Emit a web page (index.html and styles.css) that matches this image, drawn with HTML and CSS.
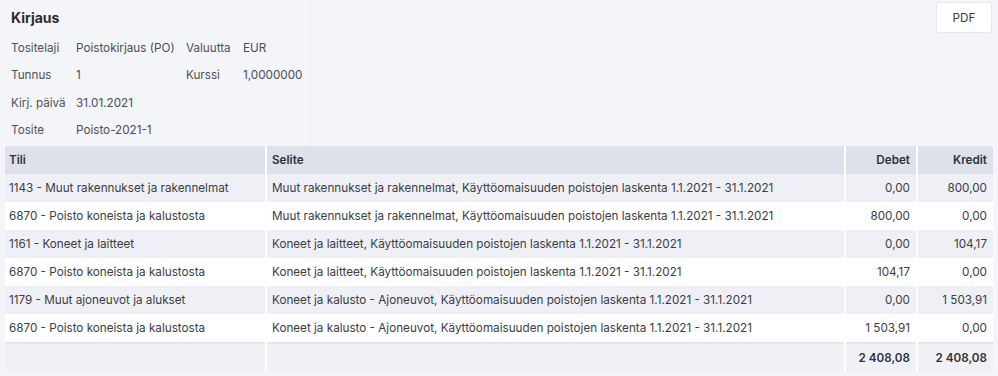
FILE: index.html
```html
<!DOCTYPE html>
<html lang="fi">
<head>
<meta charset="utf-8">
<link rel="stylesheet" href="styles.css">
</head>
<body>
<div class="page">
  <div class="top">
    <div class="info">
      <h1 class="title">Kirjaus</h1>
      <div class="grid">
        <span class="lbl">Tositelaji</span><span>Poistokirjaus (PO)</span><span class="lbl">Valuutta</span><span>EUR</span>
        <span class="lbl">Tunnus</span><span>1</span><span class="lbl">Kurssi</span><span>1,0000000</span>
        <span class="lbl">Kirj. päivä</span><span>31.01.2021</span><span></span><span></span>
        <span class="lbl">Tosite</span><span>Poisto-2021-1</span><span></span><span></span>
      </div>
    </div>
    <div class="actions"><button class="pdf">PDF</button></div>
  </div>
  <table class="tbl">
    <colgroup><col class="c1"><col class="c2"><col class="c3"><col class="c4"></colgroup>
    <thead>
      <tr><th>Tili</th><th>Selite</th><th class="num">Debet</th><th class="num">Kredit</th></tr>
    </thead>
    <tbody>
      <tr><td>1143 - Muut rakennukset ja rakennelmat</td><td>Muut rakennukset ja rakennelmat, Käyttöomaisuuden poistojen laskenta 1.1.2021 - 31.1.2021</td><td class="num">0,00</td><td class="num">800,00</td></tr>
      <tr><td>6870 - Poisto koneista ja kalustosta</td><td>Muut rakennukset ja rakennelmat, Käyttöomaisuuden poistojen laskenta 1.1.2021 - 31.1.2021</td><td class="num">800,00</td><td class="num">0,00</td></tr>
      <tr><td>1161 - Koneet ja laitteet</td><td>Koneet ja laitteet, Käyttöomaisuuden poistojen laskenta 1.1.2021 - 31.1.2021</td><td class="num">0,00</td><td class="num">104,17</td></tr>
      <tr><td>6870 - Poisto koneista ja kalustosta</td><td>Koneet ja laitteet, Käyttöomaisuuden poistojen laskenta 1.1.2021 - 31.1.2021</td><td class="num">104,17</td><td class="num">0,00</td></tr>
      <tr><td>1179 - Muut ajoneuvot ja alukset</td><td>Koneet ja kalusto - Ajoneuvot, Käyttöomaisuuden poistojen laskenta 1.1.2021 - 31.1.2021</td><td class="num">0,00</td><td class="num">1 503,91</td></tr>
      <tr><td>6870 - Poisto koneista ja kalustosta</td><td>Koneet ja kalusto - Ajoneuvot, Käyttöomaisuuden poistojen laskenta 1.1.2021 - 31.1.2021</td><td class="num">1 503,91</td><td class="num">0,00</td></tr>
    </tbody>
    <tfoot>
      <tr><td></td><td></td><td class="num">2 408,08</td><td class="num">2 408,08</td></tr>
    </tfoot>
  </table>
</div>
</body>
</html>
```
FILE: styles.css
```css
html, body {
  margin: 0;
  padding: 0;
  background: #ffffff;
}
body {
  font-family: Inter, "Liberation Sans", sans-serif;
  font-size: 11.7px;
  color: #3a3d44;
}
.page {
  width: 998px;
  height: 376px;
  background: #f4f5f8;
  box-sizing: border-box;
  padding: 0 5px 0 5px;
}
.top {
  display: flex;
  justify-content: space-between;
  height: 146px;
}
.info {
  width: 305px;
  box-sizing: border-box;
  border-right: 1px solid #eceef3;
  padding: 8px 0 0 6px;
}
.title {
  margin: 0;
  font-size: 14px;
  font-weight: 700;
  color: #2a2d33;
  line-height: 20px;
}
.grid {
  display: grid;
  grid-template-columns: 65px 110px 57px auto;
  grid-auto-rows: 27.5px;
  align-items: center;
  margin-top: 6px;
  color: #4a4d55;
}
.lbl { color: #4f525a; }
.actions {
  padding-top: 2px;
}
.pdf {
  width: 56px;
  height: 31px;
  background: #ffffff;
  border: 1px solid #e6e8ee;
  border-radius: 2px;
  font-family: Inter, "Liberation Sans", sans-serif;
  font-size: 11.7px;
  color: #3a3d44;
  margin-right: 1px;
}
.tbl {
  width: 988px;
  border-collapse: collapse;
  table-layout: fixed;
}
.c1 { width: 261px; }
.c2 { width: 579px; }
.c3 { width: 72px; }
.c4 { width: 76px; }
.tbl th, .tbl td {
  height: 28px;
  padding: 0 6px 0 5px;
  text-align: left;
  white-space: nowrap;
  border-left: 2px solid #ffffff;
}
.tbl th:first-child, .tbl td:first-child { border-left: 0; padding-left: 4px; }
.tbl th {
  background: #dee1ea;
  font-weight: 600;
  color: #2e3138;
}
.tbl th:last-child { border-top-right-radius: 3px; }
.tbl .num { text-align: right; }
.tbl tbody tr:nth-child(odd) td { background: #eef0f5; }
.tbl tbody tr:nth-child(even) td { background: #ffffff; }
.tbl tfoot td {
  background: #f0f1f5;
  font-weight: 600;
  color: #2e3138;
  border-top: 2px solid #e4e6ec;
  height: 27px;
}
```
